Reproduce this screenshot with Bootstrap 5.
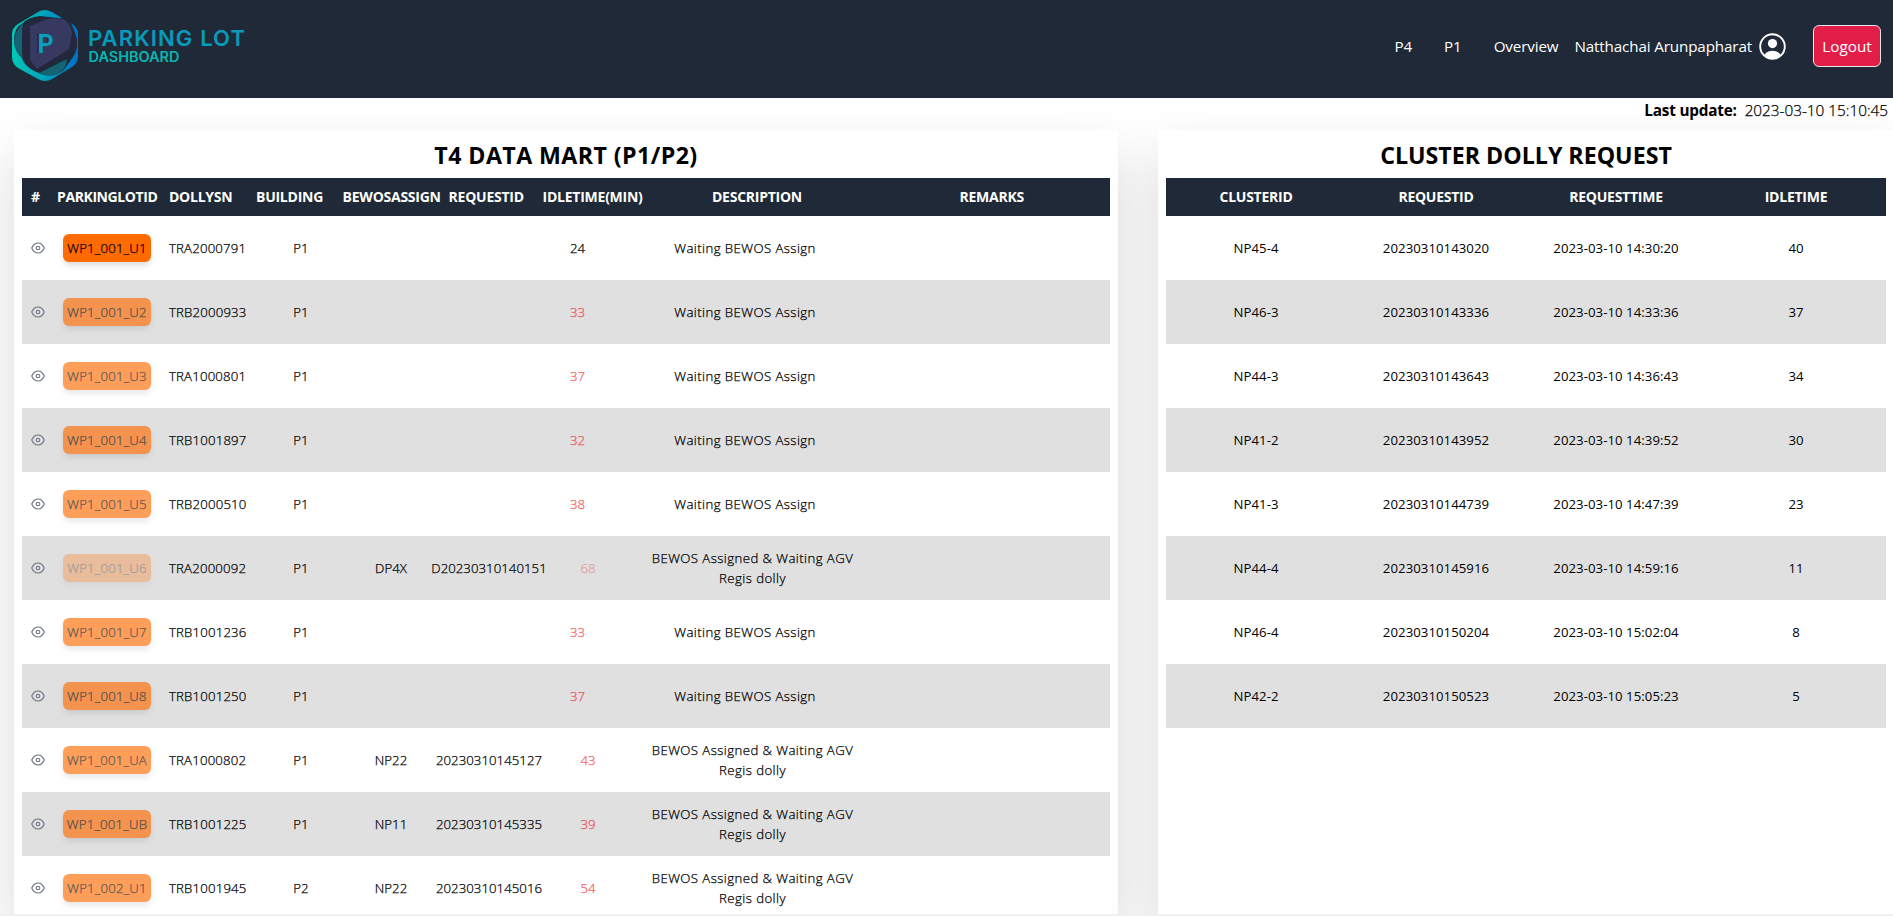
<!DOCTYPE html>
<html lang="en">
<head>
<meta charset="utf-8">
<title>Parking Lot Dashboard</title>
<link href="https://cdn.jsdelivr.net/npm/bootstrap@5.3.0/dist/css/bootstrap.min.css" rel="stylesheet">
<style>
:root{--navy:#1f2937}
body{font-family:"Open Sans","Noto Sans",sans-serif;color:#000;height:916px;overflow:hidden;background:#f0f0f0}
.topbar{height:98px;background:var(--navy);padding:0 12px 6px 10px;position:relative;z-index:2}
.topbar a{color:#fff;text-decoration:none;font-size:15.2px;letter-spacing:-.13px;white-space:nowrap}
.brand-logo{margin-bottom:1px}
.btn-logout{background:#e11d48;border:1px solid #e5e7eb;border-radius:6px;color:#fff;width:68px;height:42px;font-size:15.3px;padding:0}
.updated{height:32px;background:#fff;padding:1px 5px 0 0;font-size:15.3px;line-height:22px}
.updated b{letter-spacing:-.2px}
.updated span{font-weight:300;-webkit-text-stroke:.25px currentColor}
.panels{height:784px;gap:40px;padding-left:14px;background:#fff;clip-path:inset(-32px 0 0 0)}
.panel{background:#fff;padding:8px 8px 0;height:784px;overflow:hidden}
.panel-shell{box-shadow:0 25px 50px rgba(0,0,0,.15)}
.shell-main{width:1104px}.shell-side{width:736px}
.panel h1{font-size:23.2px;font-weight:700;line-height:34px;height:40px;margin:0;text-align:center}
.shell-main h1{letter-spacing:.42px}
.g{display:grid;align-items:center;white-space:nowrap}
.g-head{height:38px;padding-bottom:2px;background:var(--navy);color:#fff;font-weight:700;font-size:14px;letter-spacing:-.25px}
.main-head>:nth-child(2){letter-spacing:-.4px;margin-left:-1px}
.g-row{height:64px;font-size:13.2px;line-height:20px;letter-spacing:.05px}
.g-row:nth-child(odd){background:#e0e0e0}
.main-head{grid-template-columns:36px 111px 87px 86.6px 106px 94px 169.4px 247.5px 1fr}
.main-head>:first-child{padding-left:9px}
.main-row{grid-template-columns:41px 106px 90px 84px 96px 100px 98px 231px 1fr;font-weight:300;-webkit-text-stroke:.25px currentColor}
.main-row.idle-only{grid-template-columns:41px 106px 90px 84px 96px 90px 97px 238px 1fr}
.main-row>div{display:flex;justify-content:center;text-align:center}
.main-row>.at-start{justify-content:flex-start}
.main-row>.at-start:nth-child(3){letter-spacing:.18px}
.main-row>.desc{letter-spacing:.43px}
.side{grid-template-columns:repeat(4,1fr);text-align:center}
.pill{background:#ff6b00;border-radius:6px;height:28px;min-width:88px;line-height:28px;letter-spacing:.22px;text-align:center;box-shadow:0 4px 6px -1px rgba(0,0,0,.15)}
.late{opacity:.65}.very-late{opacity:.3}
.num-late{color:#f00000}
.eye{margin-left:-9px}
</style>
</head>
<body>
<nav class="topbar d-flex align-items-center justify-content-between">
<svg class="brand-logo" width="240" height="80" viewBox="10 6 240 80">
<defs><linearGradient id="lg" x1="0" x2="1"><stop offset="0" stop-color="#00c9b5"/><stop offset=".5" stop-color="#00a0bd"/><stop offset="1" stop-color="#0070c4"/></linearGradient></defs>
<path d="M38 12Q44 8 52 12L72 24Q78 28 78 34V57Q78 63 72 67L52 79Q45 83 38 79L18 68Q12 64 12 57V34Q12 28 18 24Z" fill="url(#lg)"/>
<path d="M14 42Q14 27 22 24Q28 17 40 16L58 18Q70 18 73 28L77 40Q78 50 73 57L63 71Q50 80 35 71Q24 66 22 58Q15 52 14 42Z" fill="#1f2937"/>
<path d="M14 42Q16 28 23 24V58Q15 52 14 42ZM39 73L67 59Q66 72 55 75Q46 77 39 73Z" fill="#127386" opacity=".8"/>
<path d="M22 27Q30 18 45 18H60Q72 20 76 36Q79 50 70 54L37 72Q22 66 22 52Z" fill="#25273f"/>
<path d="M30 26L48 19Q70 15 72 33L69 49L37 69L30 60Z" fill="#373a60"/>
<text x="35.500" y="53" font-family="Roboto" font-weight="700" font-size="25" fill="#25273f">P</text>
<text x="37.500" y="53" font-family="Roboto" font-weight="700" font-size="25" fill="#0aa0bd">P</text>
<text x="88" y="45.500" font-family="Inter" font-weight="600" font-size="22" textLength="157" fill="#069bbd">PARKING LOT</text>
<text x="88.500" y="61.500" font-family="Inter" font-weight="600" font-size="14" textLength="91" lengthAdjust="spacingAndGlyphs" fill="#08b7b2">DASHBOARD</text>
</svg>
<div class="d-flex align-items-center">
<a href="#" style="margin-right:32px">P4</a><a href="#" style="margin-right:32px">P1</a><a href="#" class="me-3">Overview</a><a href="#" style="margin-right:7px">Natthachai Arunpapharat</a>
<svg width="27" height="27" viewBox="0 0 27 27" style="margin-right:27px"><defs><clipPath id="c"><circle cx="13.500" cy="13.500" r="12"/></clipPath></defs><circle cx="13.500" cy="13.500" r="12.300" fill="none" stroke="#fff" stroke-width="1.900"/><circle cx="13.500" cy="10.600" r="4.600" fill="#fff"/><ellipse cx="13.500" cy="25" rx="9" ry="7.300" fill="#fff" clip-path="url(#c)"/></svg>
<button class="btn btn-logout">Logout</button>
</div>
</nav>
<div class="updated text-end"><b>Last update:</b>&nbsp; <span>2023-03-10 15:10:45</span></div>
<main class="panels d-flex">
<section class="panel-shell shell-main flex-shrink-0"><div class="panel">
<h1>T4 DATA MART (P1/P2)</h1>
<div id="main">
<div class="g g-head main-head"><span>#</span><span>PARKINGLOTID</span><span>DOLLYSN</span><span>BUILDING</span><span>BEWOSASSIGN</span><span>REQUESTID</span><span>IDLETIME(MIN)</span><span>DESCRIPTION</span><span>REMARKS</span></div>
</div></div></section>
<section class="panel-shell shell-side flex-shrink-0"><div class="panel">
<h1>CLUSTER DOLLY REQUEST</h1>
<div id="side">
<div class="g g-head side"><span>CLUSTERID</span><span>REQUESTID</span><span>REQUESTTIME</span><span>IDLETIME</span></div>
</div></div></section>
</main>
<script src="https://cdn.jsdelivr.net/npm/bootstrap@5.3.0/dist/js/bootstrap.bundle.min.js"></script>
<script>
const eye='<svg class="eye" width="14" height="14" viewBox="0 0 14 14" fill="none" stroke="#6b7280" stroke-width="1.100"><path d="M.7 7C2.200 3.700 4.300 2 7 2S11.800 3.700 13.300 7C11.800 10.300 9.700 12 7 12S2.200 10.300 .7 7Z"/><circle cx="7" cy="7" r="1.800"/></svg>';
const lots=[
['WP1_001_U1','TRA2000791','P1','','',24],
['WP1_001_U2','TRB2000933','P1','','',33],
['WP1_001_U3','TRA1000801','P1','','',37],
['WP1_001_U4','TRB1001897','P1','','',32],
['WP1_001_U5','TRB2000510','P1','','',38],
['WP1_001_U6','TRA2000092','P1','DP4X','D20230310140151',68],
['WP1_001_U7','TRB1001236','P1','','',33],
['WP1_001_U8','TRB1001250','P1','','',37],
['WP1_001_UA','TRA1000802','P1','NP22','20230310145127',43],
['WP1_001_UB','TRB1001225','P1','NP11','20230310145335',39],
['WP1_002_U1','TRB1001945','P2','NP22','20230310145016',54]];
document.getElementById('main').insertAdjacentHTML('beforeend',lots.map(r=>{
const late=r[5]>60?'very-late':r[5]>30?'late':'';
return `<div class="g g-row main-row ${r[4]?'':'idle-only'}"><div>${eye}</div><div class="at-start"><span class="pill ${late}">${r[0]}</span></div><div class="at-start">${r[1]}</div><div>${r[2]}</div><div>${r[3]}</div><div>${r[4]}</div><div><span class="${late?late+' num-late':''}">${r[5]}</span></div><div class="desc">${r[4]?'BEWOS Assigned &amp; Waiting AGV<br>Regis dolly':'Waiting BEWOS Assign'}</div><div></div></div>`}).join(''));
const reqs=[['NP45-4','14:30:20',40],['NP46-3','14:33:36',37],['NP44-3','14:36:43',34],['NP41-2','14:39:52',30],['NP41-3','14:47:39',23],['NP44-4','14:59:16',11],['NP46-4','15:02:04',8],['NP42-2','15:05:23',5]];
document.getElementById('side').insertAdjacentHTML('beforeend',reqs.map(r=>`<div class="g g-row side"><div>${r[0]}</div><div>20230310${r[1].replace(/:/g,'')}</div><div>2023-03-10 ${r[1]}</div><div>${r[2]}</div></div>`).join(''));
</script>
</body>
</html>
